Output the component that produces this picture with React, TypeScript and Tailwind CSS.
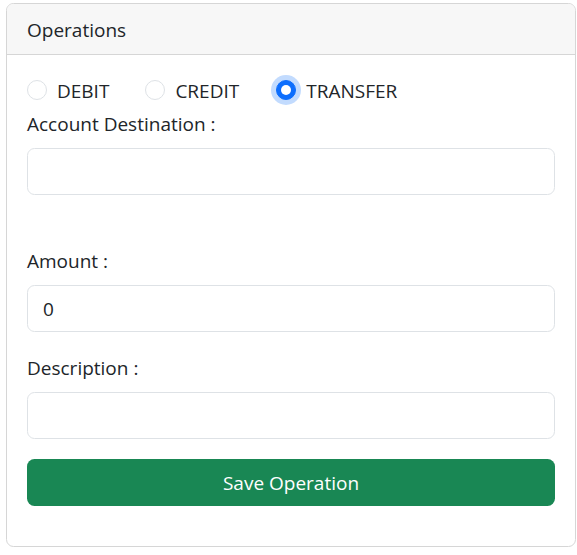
import React, { useState } from 'react';

type OpType = 'DEBIT' | 'CREDIT' | 'TRANSFER';

const Radio = ({ label, checked, onSelect, className = '' }: { label: OpType; checked: boolean; onSelect: () => void; className?: string }) => (
  <label className={`flex items-center h-[30px] cursor-pointer ${className}`} onClick={onSelect}>
    {checked ? (
      <span className="w-5 h-5 rounded-full bg-[#0d6efd] border border-[#0d6efd] shadow-[0_0_0_5px_rgba(13,110,253,0.25)] flex items-center justify-center">
        <span className="w-[10px] h-[10px] rounded-full bg-white" />
      </span>
    ) : (
      <span className="w-5 h-5 rounded-full bg-white border border-[#dee2e6]" />
    )}
    <span className="ml-[10px] pt-[2px]">{label}</span>
  </label>
);

const Field = ({ label, value = '', className = '' }: { label: string; value?: string; className?: string }) => (
  <div className={className}>
    <label className="block h-[30px] leading-[32px] mb-[10px]">{label}</label>
    <input
      defaultValue={value}
      className="block w-full h-[47px] px-[15px] pt-px border border-[#dee2e6] rounded-[7.5px] bg-white text-[#212529] outline-none"
    />
  </div>
);

export default function App() {
  const [type, setType] = useState<OpType>('TRANSFER');

  return (
    <div className="bg-white min-h-[555px] pt-[3px] pl-[6px] font-['Open_Sans',sans-serif] text-[19px] text-[#212529]">
      <div className="w-[570px] h-[544px] border border-[#d6d6d6] rounded-[7.5px] overflow-hidden">
        <div className="h-[51px] px-5 pt-[2px] flex items-center bg-[#f7f7f7] border-b border-[#d6d6d6]">Operations</div>
        <div className="px-5 pt-5">
          <div className="flex mb-[2.5px]">
            <Radio label="DEBIT" checked={type === 'DEBIT'} onSelect={() => setType('DEBIT')} />
            <Radio label="CREDIT" className="ml-[36px]" checked={type === 'CREDIT'} onSelect={() => setType('CREDIT')} />
            <Radio label="TRANSFER" className="ml-[37px]" checked={type === 'TRANSFER'} onSelect={() => setType('TRANSFER')} />
          </div>
          <Field label="Account Destination :" className="mb-[50px]" />
          <Field label="Amount :" value="0" className="mb-5" />
          <Field label="Description :" className="mb-5" />
          <button className="w-full h-[47px] pt-[3px] rounded-[7.5px] bg-[#198754] text-white">Save Operation</button>
        </div>
      </div>
    </div>
  );
}
